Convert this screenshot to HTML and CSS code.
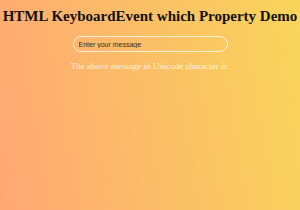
FILE: index.html
```html
<!DOCTYPE html>
<html lang="en">
<head>
  <meta charset="UTF-8" />
  <title>KeyboardEvent which Demo</title>
  <link rel="stylesheet" href="styles.css">
</head>
<body>
  <h1 class="title">HTML KeyboardEvent which Property Demo</h1>
  <div class="field">
    <input type="text" id="message" class="msg-input" placeholder="Enter your message" />
  </div>
  <p class="result">The above message in Unicode character is: <span id="output"></span></p>
</body>
</html>
```
FILE: styles.css
```css
html {
  min-height: 100%;
  background: linear-gradient(80deg, #ffa774, #f8d55a);
}
body {
  margin: 0;
  padding: 8px 0;
  font-family: "Liberation Serif", "Times New Roman", serif;
  text-align: center;
}
.title {
  font-size: 15px;
  margin: 0 0 11px;
  color: #111;
  white-space: nowrap;
}
.field {
  display: flex;
  justify-content: center;
}
.msg-input {
  width: 155px;
  height: 16px;
  box-sizing: border-box;
  padding: 0 5px;
  border: 1px solid rgba(255, 255, 255, 0.75);
  border-radius: 10px;
  background: transparent;
  font-family: "Liberation Sans", Arial, sans-serif;
  font-size: 7px;
  outline: none;
}
.msg-input::placeholder {
  color: #3a2a1a;
}
.result {
  margin: 9px 0 0;
  font-size: 9px;
  color: rgba(255, 255, 255, 0.8);
}
```
